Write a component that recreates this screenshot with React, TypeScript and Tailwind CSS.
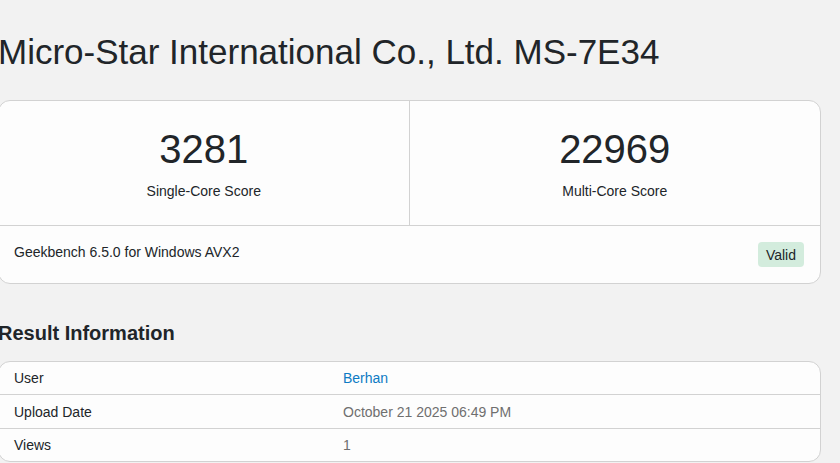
import React from "react";

type ScoreCell = {
  value: number;
  label: string;
};

type InfoRow = {
  label: string;
  value: string;
  tone: "link" | "muted";
  pad: string;
};

const scores: ReadonlyArray<ScoreCell> = [
  { value: 3281, label: "Single-Core Score" },
  { value: 22969, label: "Multi-Core Score" },
];

const resultInfo: ReadonlyArray<InfoRow> = [
  { label: "User", value: "Berhan", tone: "link", pad: "py-[6px]" },
  { label: "Upload Date", value: "October 21 2025 06:49 PM", tone: "muted", pad: "py-[6.5px]" },
  { label: "Views", value: "1", tone: "muted", pad: "py-[6px]" },
];

const ScoreBlock = ({ value, label }: ScoreCell) => (
  <div className="flex flex-col items-center pt-[24px] pb-[24px]">
    <div className="text-[40px] leading-[48px] text-[#212529]">{value}</div>
    <div className="mt-[8px] text-[14px] leading-5 text-[#212529]">{label}</div>
  </div>
);

export default function App() {
  return (
    <div
      className="min-h-[463px] w-full overflow-hidden bg-[#f2f2f2]"
      style={{ fontFamily: '"Liberation Sans", Arial, sans-serif' }}
    >
      <div className="ml-[-2px] w-[823px] pt-[31px]">
        <h1 className="text-[35px] font-normal leading-[42px] text-[#212529]">
          Micro-Star International Co., Ltd. MS-7E34
        </h1>

        <div className="mt-[27px] overflow-hidden rounded-[12px] border border-[#d2d2d2] bg-[#fdfdfd]">
          <div className="grid grid-cols-2 border-b border-[#d2d2d2]">
            {scores.map((score, i) => (
              <div key={score.label} className={i === 0 ? "border-r border-[#d2d2d2]" : ""}>
                <ScoreBlock {...score} />
              </div>
            ))}
          </div>
          <div className="flex items-start justify-between pl-[15px] pr-[16px] pt-[16px] pb-[16px]">
            <span className="text-[14px] leading-5 text-[#212529]">
              Geekbench 6.5.0 for Windows AVX2
            </span>
            <span className="rounded-[4px] bg-[#d3ecdd] px-[8px] py-[2.5px] text-[14px] leading-5 text-[#212529]">
              Valid
            </span>
          </div>
        </div>

        <h2 className="mt-[37px] text-[20px] font-bold leading-[24px] text-[#212529]">
          Result Information
        </h2>

        <div className="mt-[16px] overflow-hidden rounded-[12px] border border-[#d2d2d2] bg-[#fdfdfd]">
          {resultInfo.map((row, i) => (
            <div
              key={row.label}
              className={`flex text-[14px] leading-5 ${row.pad} ${
                i < resultInfo.length - 1 ? "border-b border-[#d2d2d2]" : ""
              }`}
            >
              <span className="w-[344px] shrink-0 pl-[15px] text-[#212529]">{row.label}</span>
              <span className={row.tone === "link" ? "text-[#0d7bc4]" : "text-[#6f6f6f]"}>
                {row.value}
              </span>
            </div>
          ))}
        </div>
      </div>
    </div>
  );
}
